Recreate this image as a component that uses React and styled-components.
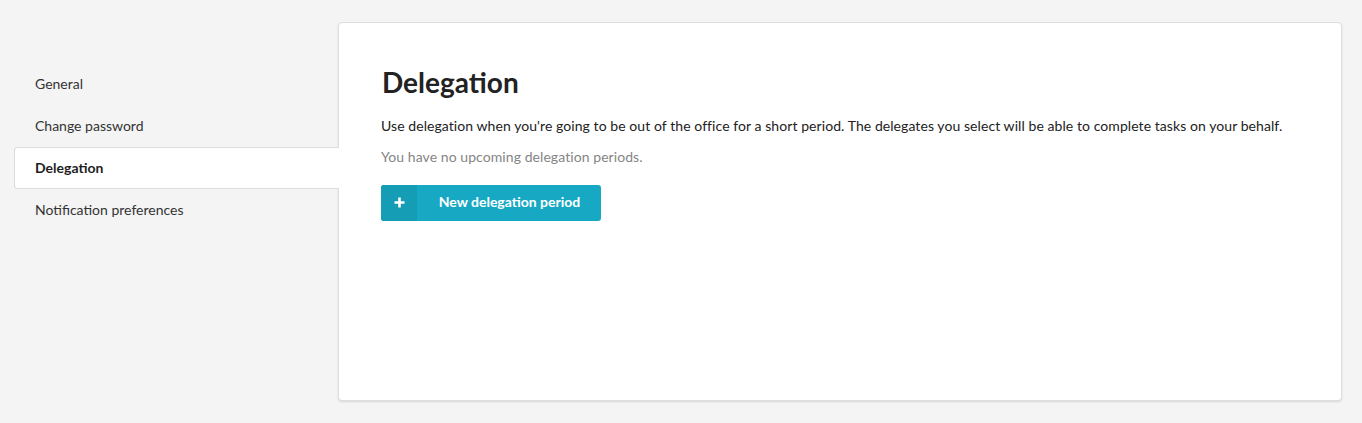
import React from "react";
import styled, { createGlobalStyle } from "styled-components";

const Global = createGlobalStyle`
  html, body { margin: 0; padding: 0; background: #f4f4f4; }
  body { font-family: Lato, "Open Sans", Arial, sans-serif; color: #222; -webkit-font-smoothing: antialiased; }
  * { box-sizing: border-box; }
`;

const Page = styled.div`
  display: flex;
  align-items: flex-start;
  padding: 22px 20px 23px 14px;
`;

const Sidebar = styled.nav`
  width: 324px;
  flex: none;
  padding-top: 41px;
  display: flex;
  flex-direction: column;
  position: relative;
  z-index: 1;
`;

const NavItem = styled.a`
  display: block;
  height: 42px;
  line-height: 40px;
  padding-left: 20px;
  font-size: 14px;
  text-decoration: none;
  cursor: pointer;
  border: 1px solid ${(p) => (p.$active ? "#dcdcdc" : "transparent")};
  border-right: none;
  border-radius: 4px 0 0 4px;
  margin-right: ${(p) => (p.$active ? "-1px" : "0")};
  background: ${(p) => (p.$active ? "#fff" : "transparent")};
  color: ${(p) => (p.$active ? "#1e1e1e" : "#333")};
  font-weight: ${(p) => (p.$active ? 700 : 400)};
`;

const Panel = styled.main`
  flex: 1;
  min-height: 379px;
  background: #fff;
  border: 1px solid #dedede;
  border-radius: 4px;
  box-shadow: 0 1px 2px rgba(0, 0, 0, 0.12);
  padding: 42px 42px 40px 42px;
`;

const Title = styled.h1`
  margin: 0 0 0 1px;
  font-size: 28px;
  line-height: 34px;
  font-weight: 700;
  color: #222;
`;

const Text = styled.p`
  margin: ${(p) => p.$margin};
  font-size: 14px;
  line-height: 20px;
  letter-spacing: 0.07px;
  color: ${(p) => (p.$muted ? "#858585" : "#222")};
`;

const ButtonRow = styled.div`
  margin-top: 18px;
  display: flex;
`;

const Button = styled.button`
  display: flex;
  align-items: stretch;
  width: 220px;
  height: 36px;
  padding: 0;
  border: none;
  border-radius: 3px;
  overflow: hidden;
  background: #17a9c4;
  color: #fff;
  font-family: inherit;
  font-size: 14px;
  font-weight: 700;
  cursor: pointer;
`;

const IconPart = styled.span`
  width: 36px;
  flex: none;
  display: flex;
  align-items: center;
  justify-content: center;
  background: #159db6;
  padding-bottom: 1px;
`;

const Label = styled.span`
  flex: 1;
  display: flex;
  align-items: center;
  justify-content: center;
  padding: 0 0 3px 1px;
`;

const items = ["General", "Change password", "Delegation", "Notification preferences"];

export default function App() {
  return (
    <>
      <Global />
      <Page>
        <Sidebar>
          {items.map((it) => (
            <NavItem key={it} $active={it === "Delegation"}>
              {it}
            </NavItem>
          ))}
        </Sidebar>
        <Panel>
          <Title>Delegation</Title>
          <Text $margin="17px 0 0">
            Use delegation when you're going to be out of the office for a short period. The delegates you select will be able to complete tasks on your behalf.
          </Text>
          <Text $muted $margin="11px 0 0">You have no upcoming delegation periods.</Text>
          <ButtonRow>
            <Button>
              <IconPart>
                <svg width="11" height="11" viewBox="0 0 11 11">
                  <path d="M5.5 0.5v10M0.5 5.5h10" stroke="#fff" strokeWidth="2.6" />
                </svg>
              </IconPart>
              <Label>New delegation period</Label>
            </Button>
          </ButtonRow>
        </Panel>
      </Page>
    </>
  );
}
